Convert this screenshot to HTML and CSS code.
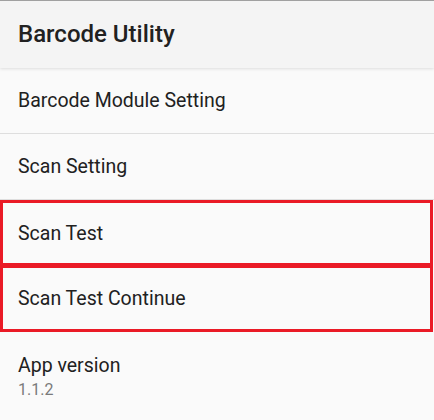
FILE: index.html
```html
<!DOCTYPE html>
<html>
<head>
<meta charset="utf-8">
<link rel="stylesheet" href="styles.css">
</head>
<body>
<div class="app">
  <header class="bar"><h1 class="title">Barcode Utility</h1></header>
  <ul class="list">
    <li class="item">Barcode Module Setting</li>
    <li class="item">Scan Setting</li>
    <li class="item hl">Scan Test</li>
    <li class="item hl hl-next">Scan Test Continue</li>
    <li class="item two">
      <span class="primary">App version</span>
      <span class="secondary">1.1.2</span>
    </li>
  </ul>
</div>
</body>
</html>
```
FILE: styles.css
```css
html, body {
  margin: 0;
  padding: 0;
  background: #fafafa;
}
body {
  font-family: Roboto, "Noto Sans", sans-serif;
  color: #212121;
  width: 434px;
  height: 420px;
  overflow: hidden;
}
.app {
  display: flex;
  flex-direction: column;
}
.bar {
  height: 67px;
  border-top: 1px solid #a0a0a0;
  background: #f4f4f4;
  box-shadow: 0 1px 3px rgba(0,0,0,0.12);
  display: flex;
  align-items: center;
  padding-left: 18px;
  position: relative;
  z-index: 1;
}
.title {
  margin: 0;
  font-size: 24px;
  font-weight: 500;
  color: #212121;
  padding-bottom: 1px;
}
.list {
  list-style: none;
  margin: 0;
  padding: 0;
}
.item {
  box-sizing: border-box;
  height: 66px;
  border-bottom: 1px solid #dedede;
  display: flex;
  align-items: center;
  padding-left: 18px;
  font-size: 19.5px;
  color: #212121;
}
.hl {
  border: 3px solid #ea1a26;
  padding-left: 15px;
  margin-right: 1px;
}
.hl-next {
  margin-top: -1px;
  height: 67px;
}
.two {
  flex-direction: column;
  align-items: flex-start;
  justify-content: flex-start;
  padding-top: 22px;
  height: 90px;
  border-bottom: none;
}
.primary {
  font-size: 19.5px;
  line-height: 24px;
}
.secondary {
  font-size: 16px;
  color: #7a7a7a;
  line-height: 22px;
  margin-top: 1px;
}
```
